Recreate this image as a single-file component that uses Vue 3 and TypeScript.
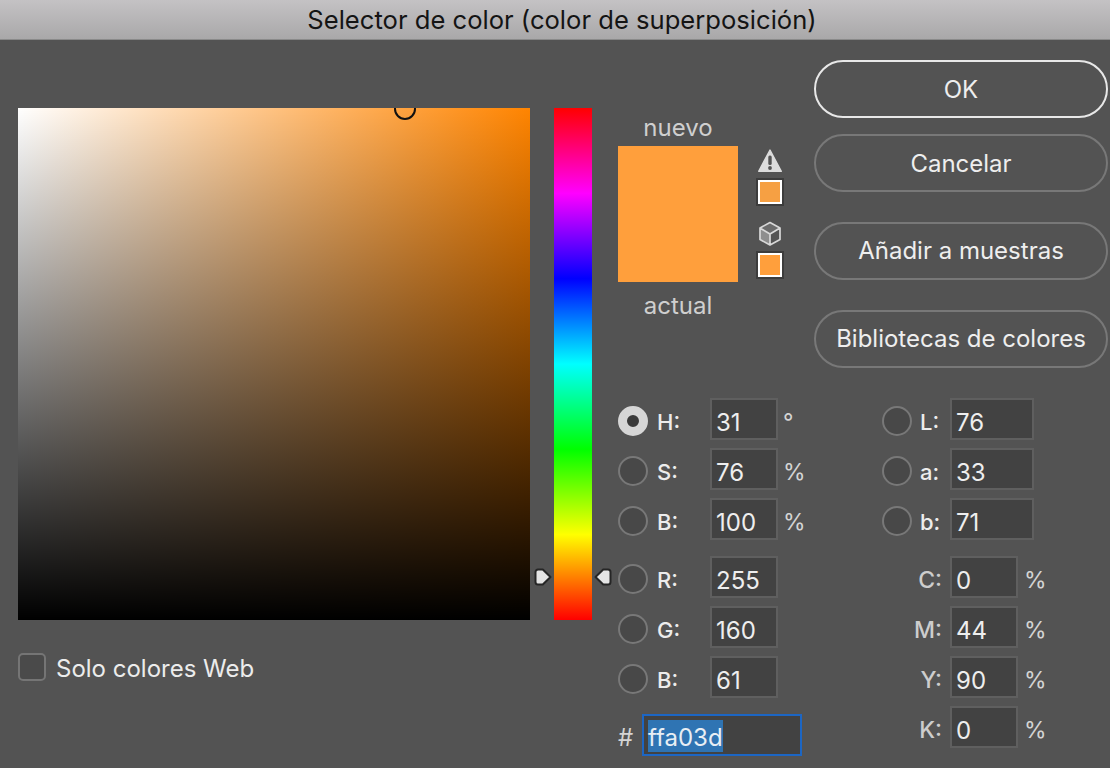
<script setup lang="ts">
interface Field { key: string; value: string; unit?: string; checked?: boolean }
const hsb: Field[] = [
  { key: 'H:', value: '31', unit: '°', checked: true },
  { key: 'S:', value: '76', unit: '%' },
  { key: 'B:', value: '100', unit: '%' },
]
const rgb: Field[] = [
  { key: 'R:', value: '255' },
  { key: 'G:', value: '160' },
  { key: 'B:', value: '61' },
]
const lab: Field[] = [
  { key: 'L:', value: '76' },
  { key: 'a:', value: '33' },
  { key: 'b:', value: '71' },
]
const cmyk: Field[] = [
  { key: 'C:', value: '0', unit: '%' },
  { key: 'M:', value: '44', unit: '%' },
  { key: 'Y:', value: '90', unit: '%' },
  { key: 'K:', value: '0', unit: '%' },
]
</script>

<template>
  <div class="dialog">
    <header class="titlebar">Selector de color (color de superposición)</header>
    <div class="body">
      <section class="left">
        <div class="field">
          <span class="picker"></span>
        </div>
        <label class="web">
          <span class="check"></span>
          <span>Solo colores Web</span>
        </label>
      </section>

      <div class="hue">
        <svg class="arrow arrow-l" width="18" height="18" viewBox="0 0 18 18">
          <path d="M4 1.500h4.800L16.500 9l-7.700 7.500H4A2.500 2.500 0 0 1 1.500 14V4A2.500 2.500 0 0 1 4 1.500z" fill="#e4e4e4" stroke="#262626" stroke-width="2" stroke-linejoin="round" />
        </svg>
        <svg class="arrow arrow-r" width="18" height="18" viewBox="0 0 18 18">
          <path d="M14 1.500H9.200L1.500 9l7.700 7.500H14a2.500 2.500 0 0 0 2.500-2.500V4A2.500 2.500 0 0 0 14 1.500z" fill="#e4e4e4" stroke="#262626" stroke-width="2" stroke-linejoin="round" />
        </svg>
      </div>

      <section class="right">
        <div class="top">
          <div class="preview">
            <div class="swatch-col">
              <div class="cap cap-new">nuevo</div>
              <div class="swatch"></div>
              <div class="cap cap-old">actual</div>
            </div>
            <div class="alerts">
              <svg class="warn" width="24" height="24" viewBox="0 0 24 24">
                <path d="M12 1L23.300 22.300H.7z" fill="#dcdcdc" stroke="#dcdcdc" stroke-width="1.400" stroke-linejoin="round" />
                <rect x="10.300" y="6.500" width="3.400" height="9.500" rx="1.500" fill="#535353" />
                <circle cx="12" cy="19" r="1.900" fill="#535353" />
              </svg>
              <span class="mini mini-warn"></span>
              <svg class="cube" width="24" height="26" viewBox="0 0 24 26">
                <path d="M12 13L2 7.500v11L12 24z" fill="#8e8e8e" />
                <path d="M12 2L2 7.500 12 13l10-5.500z" fill="#6c6c6c" />
                <path d="M12 1.500L2 7v11.500L12 24l10-5.500V7zM2 7l10 6 10-6M12 13v11" fill="none" stroke="#d8d8d8" stroke-width="1.700" stroke-linejoin="round" />
              </svg>
              <span class="mini"></span>
            </div>
          </div>
          <div class="buttons">
            <button class="btn btn-ok">OK</button>
            <button class="btn btn-cancel">Cancelar</button>
            <button class="btn btn-add">Añadir a muestras</button>
            <button class="btn btn-lib">Bibliotecas de colores</button>
          </div>
        </div>

        <div class="values">
          <div class="col col-a">
            <div class="group">
              <div v-for="f in hsb" :key="f.key" class="row">
                <span class="radio" :class="{ on: f.checked }"></span>
                <span class="key">{{ f.key }}</span>
                <span class="input narrow">{{ f.value }}</span>
                <span class="unit" :class="{ deg: f.unit === '°' }">{{ f.unit }}</span>
              </div>
            </div>
            <div class="group">
              <div v-for="f in rgb" :key="f.key" class="row">
                <span class="radio"></span>
                <span class="key">{{ f.key }}</span>
                <span class="input narrow">{{ f.value }}</span>
              </div>
            </div>
            <div class="row hex-row">
              <span class="hash">#</span>
              <span class="hex"><span class="sel">ffa03d</span></span>
            </div>
          </div>

          <div class="col col-b">
            <div class="group">
              <div v-for="f in lab" :key="f.key" class="row">
                <span class="radio"></span>
                <span class="key key-lab">{{ f.key }}</span>
                <span class="input wide">{{ f.value }}</span>
              </div>
            </div>
            <div class="group">
              <div v-for="f in cmyk" :key="f.key" class="row">
                <span class="key key-cmyk">{{ f.key }}</span>
                <span class="input narrow">{{ f.value }}</span>
                <span class="unit unit-cmyk">{{ f.unit }}</span>
              </div>
            </div>
          </div>
        </div>
      </section>
    </div>
  </div>
</template>

<style>
html, body { margin: 0; background: #535353; }
</style>

<style scoped>
.dialog {
  width: 1110px;
  height: 768px;
  overflow: hidden;
  background: #535353;
  font-family: Inter, "Liberation Sans", sans-serif;
  font-size: 24px;
  color: #e8e8e8;
}
.titlebar {
  box-sizing: border-box;
  height: 40px;
  display: flex;
  align-items: center;
  justify-content: center;
  padding: 0 0 1px 14px;
  background: linear-gradient(#c4c2c4, #a9a8a9);
  border-bottom: 1px solid #8a8a8a;
  color: #141414;
  font-size: 25.600px;
}
.body { display: flex; }
.left { margin: 68px 0 0 18px; width: 512px; }
.field {
  position: relative;
  width: 512px;
  height: 512px;
  overflow: hidden;
  background:
    linear-gradient(rgba(0, 0, 0, 0), #000),
    linear-gradient(90deg, #fff, #ff8400);
}
.picker {
  position: absolute;
  left: 376px;
  top: -10px;
  width: 18px;
  height: 18px;
  border: 2px solid #111;
  border-radius: 50%;
}
.web { display: flex; align-items: center; gap: 10px; margin-top: 32px; height: 30px; color: #ececec; }
.web span:last-child { padding-top: 2px; }
.check {
  box-sizing: border-box;
  width: 28px;
  height: 28px;
  background: #4a4a4a;
  border: 2px solid #757575;
  border-radius: 5px;
}
.hue {
  position: relative;
  margin: 68px 0 0 24px;
  width: 38px;
  height: 512px;
  background: linear-gradient(#f00, #f0f 16.667%, #00f 33.333%, #0ff 50%, #0f0 66.667%, #ff0 83.333%, #f00);
}
.arrow { position: absolute; top: 460px; }
.arrow-l { left: -20px; }
.arrow-r { right: -20px; }
.right { margin-left: 26px; width: 492px; }
.top { display: flex; height: 358px; }
.preview { display: flex; width: 196px; }
.swatch-col { width: 120px; }
.cap { text-align: center; color: #cfcfcf; }
.cap-new { margin-top: 73px; height: 33px; line-height: 30px; }
.cap-old { height: 40px; line-height: 48px; }
.swatch { height: 136px; background: #ff9f3c; }
.alerts { display: flex; flex-direction: column; align-items: center; width: 28px; margin: 109px 0 0 18px; }
.warn { display: block; }
.cube { display: block; margin-top: 15px; margin-bottom: 4px; }
.mini {
  box-sizing: border-box;
  display: block;
  flex: none;
  width: 28px;
  height: 28px;
  background: #ff9f3c;
  border: 2px solid #3c3c3c;
  box-shadow: inset 0 0 0 2px #fff;
}
.mini-warn { margin-top: 5px; background: #f6a043; }
.buttons { width: 294px; padding-top: 20px; display: flex; flex-direction: column; }
.btn {
  box-sizing: border-box;
  width: 294px;
  height: 58px;
  flex: none;
  padding: 0 0 2px;
  background: transparent;
  border: 2px solid #787878;
  border-radius: 29px;
  color: #eeeeee;
  font: inherit;
}
.btn-ok { border-color: #e8e8e8; padding: 0; }
.btn-cancel { margin-top: 16px; padding: 0; }
.btn-add, .btn-lib { margin-top: 30px; }
.values { display: flex; }
.col { display: flex; flex-direction: column; gap: 16px; }
.col-a { width: 264px; }
.group { display: flex; flex-direction: column; gap: 8px; }
.row { display: flex; align-items: center; height: 42px; }
.radio {
  box-sizing: border-box;
  flex: none;
  width: 30px;
  height: 30px;
  margin-top: 4px;
  background: #484848;
  border: 2px solid #787878;
  border-radius: 50%;
}
.radio.on {
  background: #3a3a3a;
  border: 9px solid #d6d6d6;
}
.key { width: 62px; padding-left: 9px; box-sizing: border-box; font-weight: 500; font-size: 22px; color: #ececec; flex: none; margin-top: 5px; }
.key-lab { width: 38px; padding-left: 8px; }
.key-cmyk { width: 68px; padding: 0; text-align: right; padding-right: 8px; color: #cdcdcd; font-size: 23px; }
.input {
  box-sizing: border-box;
  flex: none;
  height: 42px;
  display: flex;
  align-items: center;
  padding: 7px 0 0 4px;
  background: #424242;
  border: 2px solid #5f5f5f;
  color: #eeeeee;
}
.narrow { width: 68px; }
.wide { width: 84px; }
.unit { margin-left: 5px; margin-top: 5px; color: #d4d4d4; font-size: 23px; }
.unit.deg { margin-top: 6px; }
.unit-cmyk { margin-left: 6px; }
.hash { width: 24px; margin-top: 4px; color: #d4d4d4; }
.hex {
  box-sizing: border-box;
  width: 160px;
  height: 42px;
  padding: 4px;
  background: #424242;
  border: 2px solid #1c66c4;
  display: flex;
}
.sel { display: block; background: #2f74b3; color: #e8eef4; line-height: 36px; height: 32px; }
</style>
